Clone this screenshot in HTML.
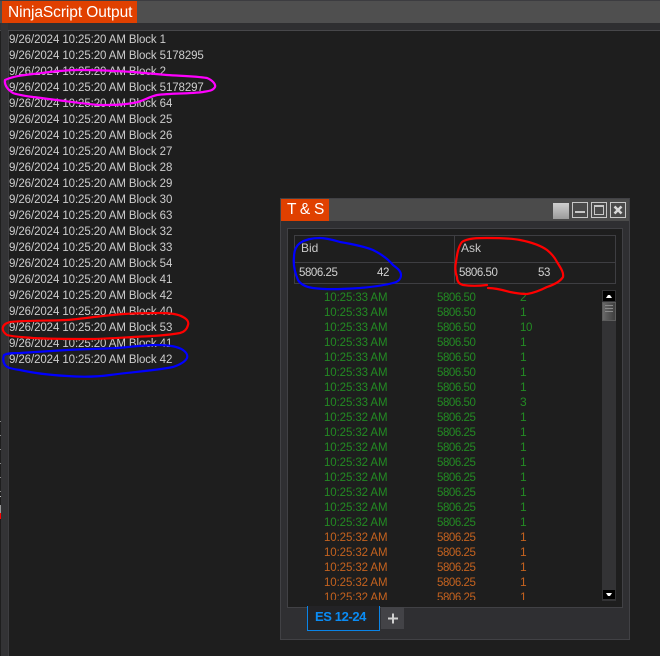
<!DOCTYPE html>
<html><head><meta charset="utf-8"><style>
html,body{margin:0;padding:0;background:#1e1e1e}
#p{position:relative;width:660px;height:656px;overflow:hidden;background:#1e1e1e;font-family:"Liberation Sans",sans-serif;font-size:12px;color:#c8c8c8}
.a{position:absolute}
.l{position:absolute;left:9px;margin-top:1px;line-height:16px;height:16px;white-space:nowrap;font-size:11.5px;letter-spacing:-0.1px;color:#cdcdcd}
.r{position:absolute;height:15px;line-height:15px;white-space:nowrap;font-size:12px}
.n{font-size:11.5px;letter-spacing:-0.45px;margin-top:1px}
.t{font-size:11.5px;letter-spacing:-0.1px;margin-top:1px}
.g{color:#238a23}.o{color:#c4621f}
</style></head><body><div id="p">
<div class="a" style="left:0;top:0;width:660px;height:1px;background:#3c3c40"></div>
<div class="a" style="left:0;top:1px;width:660px;height:22px;background:#4f4f4f"></div>
<div class="a" style="left:0;top:23px;width:660px;height:7px;background:#2f2f31"></div>
<div class="a" style="left:0;top:30px;width:660px;height:1px;background:#47474a"></div>
<div class="a" style="left:2px;top:1px;width:135px;height:22px;background:#e04000;color:#fff;font-size:15.5px;line-height:23px;text-indent:6px;letter-spacing:-0.08px;white-space:nowrap">NinjaScript Output</div>
<div class="a" style="left:1px;top:23px;width:7px;height:633px;background:#333335"></div>
<div class="a" style="left:8px;top:31px;width:1px;height:625px;background:#3d3d40"></div>
<div class="a" style="left:0;top:421px;width:1px;height:1px;background:#888"></div>
<div class="a" style="left:0;top:435px;width:1px;height:1px;background:#888"></div>
<div class="a" style="left:0;top:449px;width:1px;height:1px;background:#888"></div>
<div class="a" style="left:0;top:463px;width:1px;height:1px;background:#888"></div>
<div class="a" style="left:0;top:477px;width:1px;height:1px;background:#888"></div>
<div class="a" style="left:0;top:491px;width:1px;height:1px;background:#888"></div>
<div class="a" style="left:0;top:496px;width:1px;height:1px;background:#bbb"></div>
<div class="a" style="left:0;top:505px;width:1px;height:8px;background:#999"></div>
<div class="a" style="left:0;top:513px;width:1px;height:6px;background:#f00"></div>

<div class="l" style="top:31px">9/26/2024 10:25:20 AM Block 1</div>
<div class="l" style="top:47px">9/26/2024 10:25:20 AM Block 5178295</div>
<div class="l" style="top:63px">9/26/2024 10:25:20 AM Block 2</div>
<div class="l" style="top:79px">9/26/2024 10:25:20 AM Block 5178297</div>
<div class="l" style="top:95px">9/26/2024 10:25:20 AM Block 64</div>
<div class="l" style="top:111px">9/26/2024 10:25:20 AM Block 25</div>
<div class="l" style="top:127px">9/26/2024 10:25:20 AM Block 26</div>
<div class="l" style="top:143px">9/26/2024 10:25:20 AM Block 27</div>
<div class="l" style="top:159px">9/26/2024 10:25:20 AM Block 28</div>
<div class="l" style="top:175px">9/26/2024 10:25:20 AM Block 29</div>
<div class="l" style="top:191px">9/26/2024 10:25:20 AM Block 30</div>
<div class="l" style="top:207px">9/26/2024 10:25:20 AM Block 63</div>
<div class="l" style="top:223px">9/26/2024 10:25:20 AM Block 32</div>
<div class="l" style="top:239px">9/26/2024 10:25:20 AM Block 33</div>
<div class="l" style="top:255px">9/26/2024 10:25:20 AM Block 54</div>
<div class="l" style="top:271px">9/26/2024 10:25:20 AM Block 41</div>
<div class="l" style="top:287px">9/26/2024 10:25:20 AM Block 42</div>
<div class="l" style="top:303px">9/26/2024 10:25:20 AM Block 40</div>
<div class="l" style="top:319px">9/26/2024 10:25:20 AM Block 53</div>
<div class="l" style="top:335px">9/26/2024 10:25:20 AM Block 41</div>
<div class="l" style="top:351px">9/26/2024 10:25:20 AM Block 42</div>

<!-- T&S window -->
<div class="a" style="left:280px;top:198px;width:348px;height:440px;background:#2f2f32;border:1px solid #414145;box-sizing:content-box"></div>
<div class="a" style="left:281px;top:199px;width:348px;height:22px;background:#4b4b4b"></div>
<div class="a" style="left:281px;top:199px;width:48px;height:22px;background:#e04000;color:#fff;font-size:15.5px;line-height:22px;text-indent:6px;white-space:nowrap;letter-spacing:-0.3px">T &amp; S</div>
<div class="a" style="left:553px;top:203px;width:16px;height:16px;background:linear-gradient(#cfcfcf,#9a9a9a)"></div>
<div class="a" style="left:572px;top:202px;width:14px;height:14px;border:1px solid #c8c8c8"></div>
<div class="a" style="left:575px;top:211px;width:10px;height:2px;background:#c8c8c8"></div>
<div class="a" style="left:591px;top:202px;width:14px;height:14px;border:1px solid #c8c8c8"></div>
<div class="a" style="left:594px;top:205px;width:10px;height:10px;border:1px solid #c8c8c8;border-top-width:2px;box-sizing:border-box"></div>
<div class="a" style="left:610px;top:202px;width:14px;height:14px;border:1px solid #c8c8c8"></div>
<svg class="a" style="left:610px;top:202px" width="16" height="16"><path d="M4.5 4.5L11.5 11.5M11.5 4.5L4.5 11.5" stroke="#d8d8d8" stroke-width="2.6"/></svg>

<div class="a" style="left:287px;top:228px;width:334px;height:378px;background:#1e1e1e;border:1px solid #414145"></div>
<div class="a" style="left:294px;top:235px;width:320px;height:47px;border:1px solid #3e3e42"></div>
<div class="a" style="left:295px;top:262px;width:320px;height:1px;background:#3e3e42"></div>
<div class="a" style="left:454px;top:236px;width:1px;height:47px;background:#3e3e42"></div>
<div class="r" style="left:301px;top:241px;color:#c8c8c8">Bid</div>
<div class="r" style="left:461px;top:241px;color:#c8c8c8">Ask</div>
<div class="r n" style="left:299px;top:265px;color:#d0d0d0">5806.25</div>
<div class="r n" style="left:377px;top:265px;color:#d0d0d0">42</div>
<div class="r n" style="left:459px;top:265px;color:#d0d0d0">5806.50</div>
<div class="r n" style="left:538px;top:265px;color:#d0d0d0">53</div>

<div class="a" style="left:295px;top:290px;width:300px;height:310px;overflow:hidden">
<div class="r g t" style="left:29px;top:0px">10:25:33 AM</div><div class="r g n" style="left:142px;top:0px">5806.50</div><div class="r g" style="left:225px;top:0px">2</div>
<div class="r g t" style="left:29px;top:15px">10:25:33 AM</div><div class="r g n" style="left:142px;top:15px">5806.50</div><div class="r g" style="left:225px;top:15px">1</div>
<div class="r g t" style="left:29px;top:30px">10:25:33 AM</div><div class="r g n" style="left:142px;top:30px">5806.50</div><div class="r g n" style="left:225px;top:30px">10</div>
<div class="r g t" style="left:29px;top:45px">10:25:33 AM</div><div class="r g n" style="left:142px;top:45px">5806.50</div><div class="r g" style="left:225px;top:45px">1</div>
<div class="r g t" style="left:29px;top:60px">10:25:33 AM</div><div class="r g n" style="left:142px;top:60px">5806.50</div><div class="r g" style="left:225px;top:60px">1</div>
<div class="r g t" style="left:29px;top:75px">10:25:33 AM</div><div class="r g n" style="left:142px;top:75px">5806.50</div><div class="r g" style="left:225px;top:75px">1</div>
<div class="r g t" style="left:29px;top:90px">10:25:33 AM</div><div class="r g n" style="left:142px;top:90px">5806.50</div><div class="r g" style="left:225px;top:90px">1</div>
<div class="r g t" style="left:29px;top:105px">10:25:33 AM</div><div class="r g n" style="left:142px;top:105px">5806.50</div><div class="r g" style="left:225px;top:105px">3</div>
<div class="r g t" style="left:29px;top:120px">10:25:32 AM</div><div class="r g n" style="left:142px;top:120px">5806.25</div><div class="r g" style="left:225px;top:120px">1</div>
<div class="r g t" style="left:29px;top:135px">10:25:32 AM</div><div class="r g n" style="left:142px;top:135px">5806.25</div><div class="r g" style="left:225px;top:135px">1</div>
<div class="r g t" style="left:29px;top:150px">10:25:32 AM</div><div class="r g n" style="left:142px;top:150px">5806.25</div><div class="r g" style="left:225px;top:150px">1</div>
<div class="r g t" style="left:29px;top:165px">10:25:32 AM</div><div class="r g n" style="left:142px;top:165px">5806.25</div><div class="r g" style="left:225px;top:165px">1</div>
<div class="r g t" style="left:29px;top:180px">10:25:32 AM</div><div class="r g n" style="left:142px;top:180px">5806.25</div><div class="r g" style="left:225px;top:180px">1</div>
<div class="r g t" style="left:29px;top:195px">10:25:32 AM</div><div class="r g n" style="left:142px;top:195px">5806.25</div><div class="r g" style="left:225px;top:195px">1</div>
<div class="r g t" style="left:29px;top:210px">10:25:32 AM</div><div class="r g n" style="left:142px;top:210px">5806.25</div><div class="r g" style="left:225px;top:210px">1</div>
<div class="r g t" style="left:29px;top:225px">10:25:32 AM</div><div class="r g n" style="left:142px;top:225px">5806.25</div><div class="r g" style="left:225px;top:225px">1</div>
<div class="r o t" style="left:29px;top:240px">10:25:32 AM</div><div class="r o n" style="left:142px;top:240px">5806.25</div><div class="r o" style="left:225px;top:240px">1</div>
<div class="r o t" style="left:29px;top:255px">10:25:32 AM</div><div class="r o n" style="left:142px;top:255px">5806.25</div><div class="r o" style="left:225px;top:255px">1</div>
<div class="r o t" style="left:29px;top:270px">10:25:32 AM</div><div class="r o n" style="left:142px;top:270px">5806.25</div><div class="r o" style="left:225px;top:270px">1</div>
<div class="r o t" style="left:29px;top:285px">10:25:32 AM</div><div class="r o n" style="left:142px;top:285px">5806.25</div><div class="r o" style="left:225px;top:285px">1</div>
<div class="r o t" style="left:29px;top:300px">10:25:32 AM</div><div class="r o n" style="left:142px;top:300px">5806.25</div><div class="r o" style="left:225px;top:300px">1</div>
</div>

<!-- scrollbar -->
<div class="a" style="left:602px;top:290px;width:14px;height:311px;background:#333335"></div>
<div class="a" style="left:603px;top:291px;width:12px;height:10px;background:#000"></div>
<svg class="a" style="left:603px;top:291px" width="12" height="10"><path d="M3 7H9L7 4H5Z" fill="#fff"/></svg>
<div class="a" style="left:602px;top:302px;width:14px;height:19px;background:linear-gradient(90deg,#6a6a6a,#555 45%,#3f3f3f);box-sizing:border-box;border:1px solid #5c5c5c"></div>
<div class="a" style="left:605px;top:305px;width:8px;height:1px;background:#8a8a8a"></div>
<div class="a" style="left:605px;top:308px;width:8px;height:1px;background:#8a8a8a"></div>
<div class="a" style="left:605px;top:311px;width:8px;height:1px;background:#8a8a8a"></div>
<div class="a" style="left:603px;top:590px;width:12px;height:9px;background:#000"></div>
<svg class="a" style="left:603px;top:590px" width="12" height="9"><path d="M3 3H9L7 6H5Z" fill="#fff"/></svg>

<!-- tabs -->
<div class="a" style="left:307px;top:606px;width:73px;height:25px;box-sizing:border-box;border:1px solid #0a84e8;border-top:0;background:#232326;color:#0a8cf5;font-weight:bold;font-size:13px;letter-spacing:-0.4px;line-height:22px;text-indent:7px;white-space:nowrap">ES 12-24</div>
<div class="a" style="left:381px;top:607px;width:23px;height:22px;background:#434347"></div>
<svg class="a" style="left:381px;top:607px" width="23" height="22"><path d="M7 11.5H17M12 6.5V16.5" stroke="#d0d0d0" stroke-width="2"/></svg>

<!-- ink annotations -->
<svg class="a" style="left:0;top:0" width="660" height="656" fill="none" stroke-linecap="round" stroke-linejoin="round" stroke-width="2.2">
<path stroke="#ff00ff" d="M5 80C14 76 24 75 33 74C50 72 62 70 80 70C100 70 116 71 133 72C145 73 155 74 167 75C182 76 195 76 207 78C212 80 216 84 215 87C213 91 208 91 203 92C188 94 172 93 157 95C148 97 142 102 133 103C122 105 112 105 100 105C85 104 72 102 57 100C48 99 42 98 33 97C26 96 18 95 13 93C8 90 4 85 5 80Z"/>
<path stroke="#ff0000" d="M3 327C4 324 7 323 10 322C30 320 48 321 67 320C82 319 98 316 113 315C130 313 145 313 160 313C170 313 178 314 183 317C187 319 189 322 188 325C187 329 184 332 180 333C165 336 148 336 133 337C118 338 102 339 87 339C68 339 50 339 33 338C24 337 14 337 7 335C4 333 2 330 3 327Z"/>
<path stroke="#0000ff" d="M4 355C8 353 14 353 20 353C36 352 52 351 67 350C84 349 100 349 117 348C130 347 144 345 157 345C167 345 177 346 183 350C186 352 188 355 187 358C185 362 179 365 173 367C152 371 131 372 110 375C96 377 81 377 67 376C50 375 33 373 20 370C13 369 7 368 5 365C3 362 3 358 4 355Z"/>
<path stroke="#0000ff" d="M294 257C294 251 296 246 300 243C306 239 313 238 320 238C327 238 333 240 340 242C352 244 363 246 373 250C381 254 388 259 393 265C397 268 401 271 401 275C401 279 398 282 393 283C382 286 371 287 360 288C344 289 328 290 313 288C306 287 301 285 298 280C295 273 293 265 294 257Z"/>
<path stroke="#ff0000" d="M487 285C479 286 470 286 463 285C459 284 457 281 457 277C455 272 455 267 456 262C457 255 458 247 462 242C468 238 478 238 487 238C498 238 510 238 520 240C530 242 540 245 547 250C552 254 555 258 557 262C560 267 564 272 563 277C560 282 553 285 547 287C541 290 534 293 527 294C521 294 515 293 510 292C503 290 495 288 488 288"/>
</svg>
</div></body></html>
